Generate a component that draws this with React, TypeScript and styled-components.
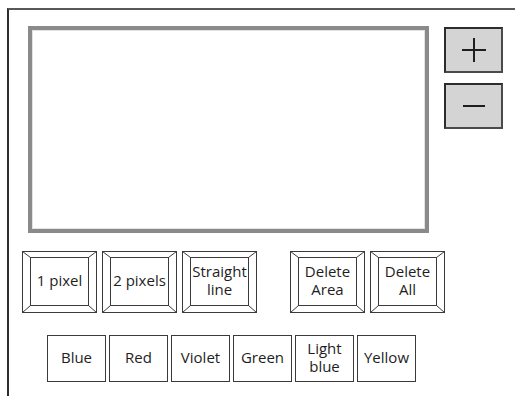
import React from 'react';
import styled, { createGlobalStyle } from 'styled-components';

const GlobalStyle = createGlobalStyle`
    html, body {
        margin: 0;
        padding: 0;
        background: #FFFFFF;
        overflow: hidden;
    }

    body {
        font-family: "Open Sans", "Noto Sans", sans-serif;
        color: #1E1E1E;
    }
`;

const Frame = styled.div`
    box-sizing: border-box;
    margin: 8px 0 0 7px;
    height: 388px;

    border-top: 2px solid #585858;
    border-left: 2px solid #2E2E2E;
`;

const TopArea = styled.div`
    display: flex;
    gap: 15px;

    padding: 16px 0 0 19px;
`;

const Canvas = styled.div`
    box-sizing: border-box;
    width: 401px;
    height: 207px;

    background: #FFFFFF;
    border: 4px solid #8A8A8A;
    box-shadow: inset 0 0 0 1px #E2E2E2;
`;

const ZoomColumn = styled.div`
    display: flex;
    flex-direction: column;
    gap: 10px;

    padding-top: 1px;
`;

const ZoomButton = styled.div`
    box-sizing: border-box;
    display: flex;
    align-items: center;
    justify-content: center;

    width: 59px;
    height: 46px;

    background: #D4D4D4;
    border: 2px solid #2C2C2C;
    border-right-color: #4A4A4A;
    border-bottom-color: #4A4A4A;
`;

const ToolRow = styled.div`
    display: flex;
    gap: 5px;

    margin-top: 18px;
    padding-left: 13px;
`;

const Spacer = styled.div`
    width: 23px;
`;

const ToolButton = styled.div`
    position: relative;
    box-sizing: border-box;
    display: flex;
    align-items: center;
    justify-content: center;

    width: 75px;
    height: 62px;
    padding-bottom: 5px;
`;

const Bevel = styled.svg`
    position: absolute;
    inset: 0;
`;

const Label = styled.div`
    position: relative;
    display: flex;
    flex-direction: column;
    align-items: center;
`;

const Line = styled.div`
    font-size: 15px;
    line-height: 18px;
    white-space: nowrap;
`;

const ColorRow = styled.div`
    display: flex;
    gap: 3px;

    margin-top: 22px;
    padding-left: 38px;
`;

const ColorButton = styled.div`
    box-sizing: border-box;
    display: flex;
    align-items: center;
    justify-content: center;

    width: 59px;
    height: 47px;
    padding-bottom: 4px;

    border: 1px solid #3A3A3A;
`;

const tools = [
    ['1 pixel'],
    ['2 pixels'],
    ['Straight', 'line'],
    null,
    ['Delete', 'Area'],
    ['Delete', 'All'],
];

const colors = [['Blue'], ['Red'], ['Violet'], ['Green'], ['Light', 'blue'], ['Yellow']];

const BevelLines: React.FC = () => (
    <Bevel width="75" height="62" viewBox="0 0 75 62">
        <g fill="none" stroke="#3A3A3A" strokeWidth="1">
            <rect x="0.5" y="0.5" width="74" height="61" />
            <rect x="8.5" y="6.5" width="58" height="48" />
            <line x1="0.5" y1="0.5" x2="8.5" y2="6.5" />
            <line x1="74.5" y1="0.5" x2="66.5" y2="6.5" />
            <line x1="0.5" y1="61.5" x2="8.5" y2="54.5" />
            <line x1="74.5" y1="61.5" x2="66.5" y2="54.5" />
        </g>
    </Bevel>
);

const Lines: React.FC<{ lines: string[] }> = ({ lines }) => (
    <Label>
        {lines.map((l, i) => (
            <Line key={i}>{l}</Line>
        ))}
    </Label>
);

export default function App() {
    return (
        <>
            <GlobalStyle />
            <Frame>
                <TopArea>
                    <Canvas />
                    <ZoomColumn>
                        <ZoomButton>
                            <svg width="24" height="24" viewBox="0 0 24 24">
                                <path d="M0 12H24M12 0V24" stroke="#1E1E1E" strokeWidth="2" />
                            </svg>
                        </ZoomButton>
                        <ZoomButton>
                            <svg width="24" height="24" viewBox="0 0 24 24">
                                <path d="M1 12H23" stroke="#1E1E1E" strokeWidth="2" />
                            </svg>
                        </ZoomButton>
                    </ZoomColumn>
                </TopArea>

                <ToolRow>
                    {tools.map((t, i) =>
                        t ? (
                            <ToolButton key={i}>
                                <BevelLines />
                                <Lines lines={t} />
                            </ToolButton>
                        ) : (
                            <Spacer key={i} />
                        )
                    )}
                </ToolRow>

                <ColorRow>
                    {colors.map((c, i) => (
                        <ColorButton key={i}>
                            <Lines lines={c} />
                        </ColorButton>
                    ))}
                </ColorRow>
            </Frame>
        </>
    );
}
